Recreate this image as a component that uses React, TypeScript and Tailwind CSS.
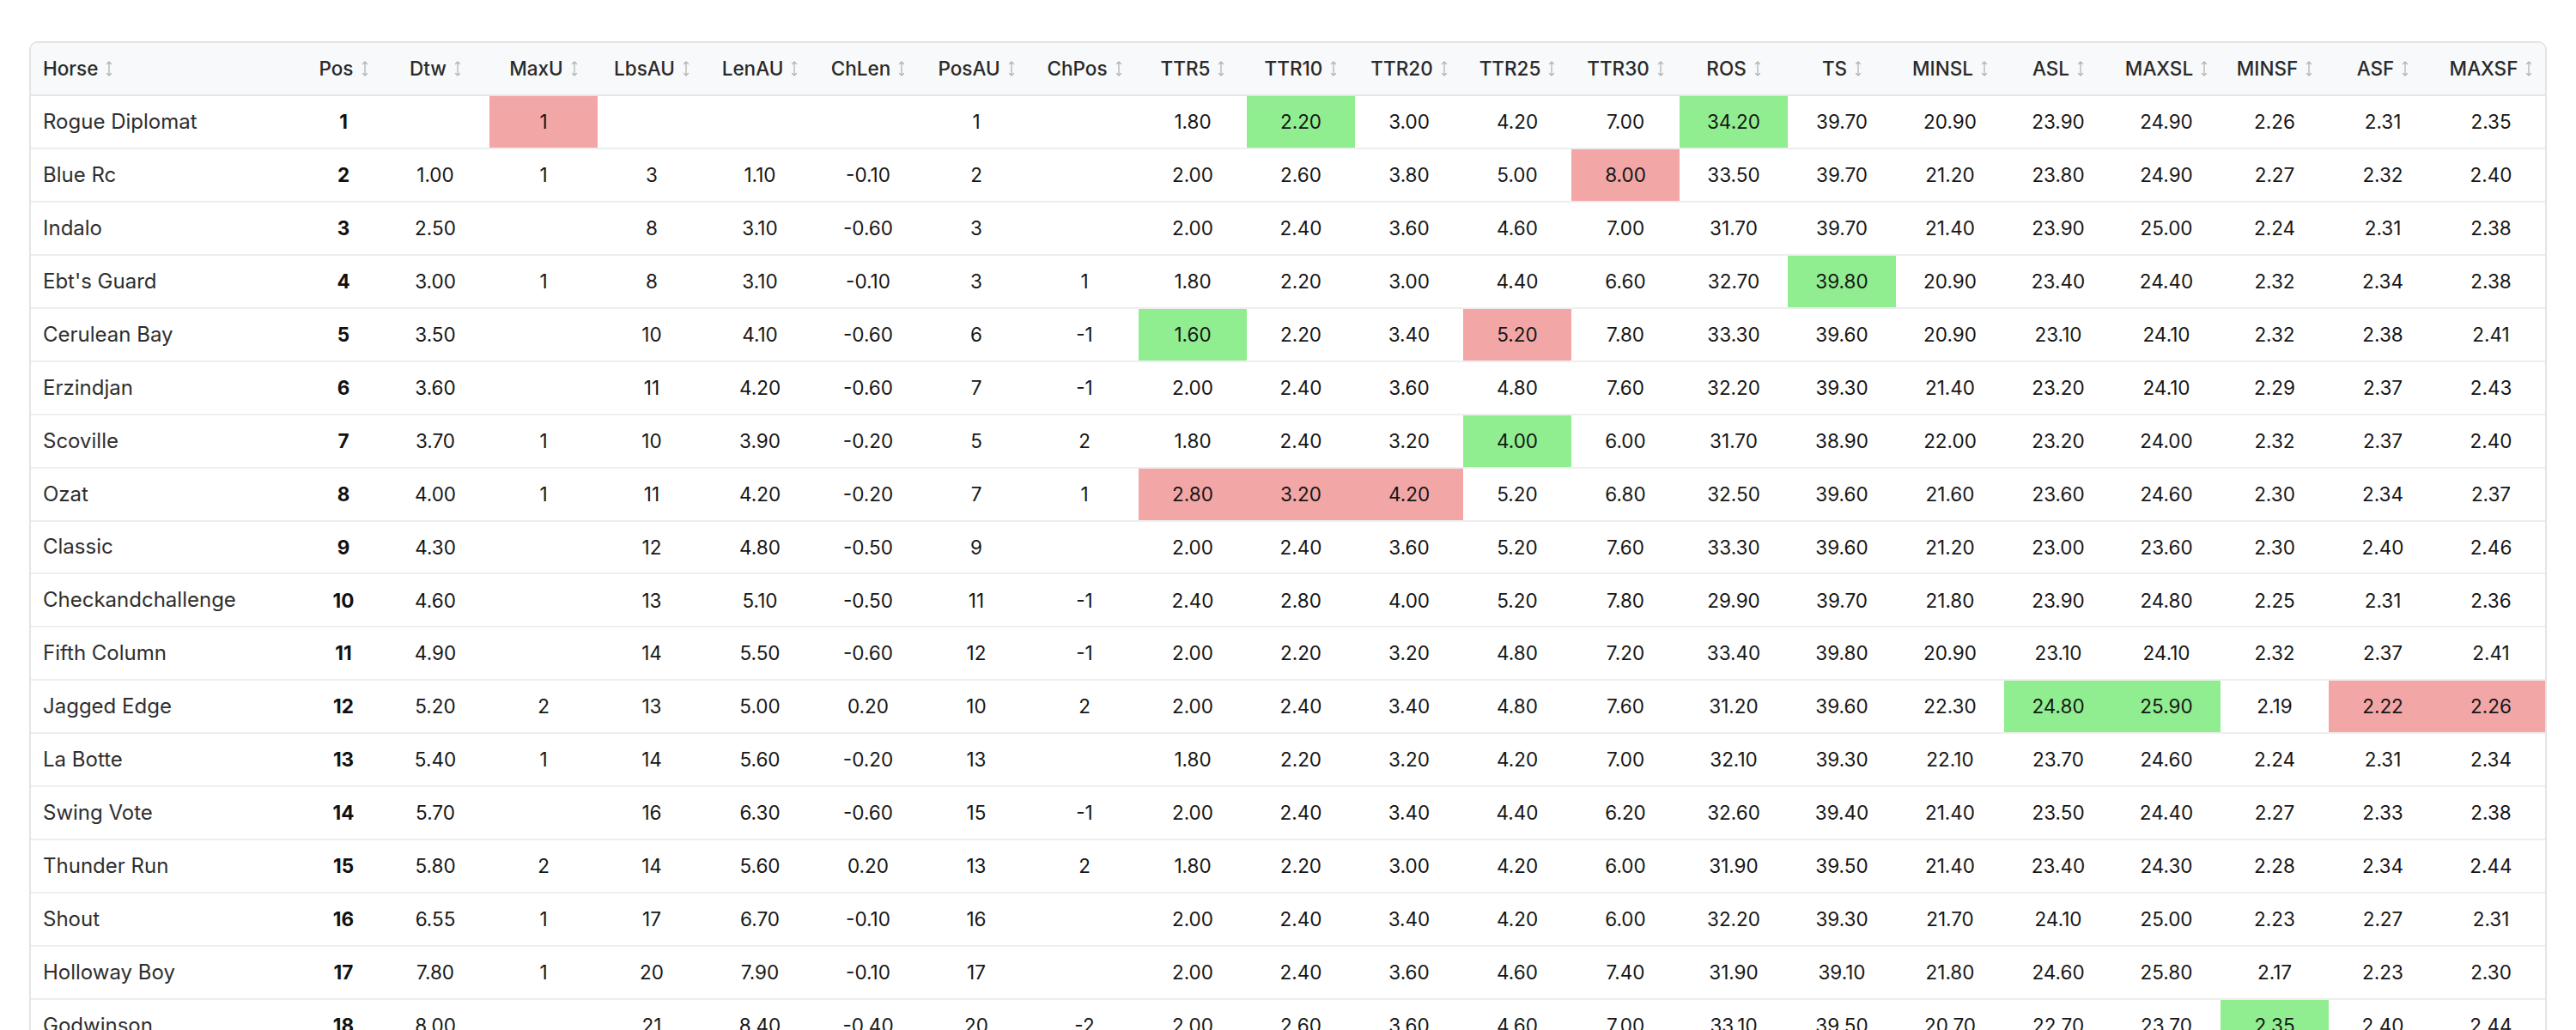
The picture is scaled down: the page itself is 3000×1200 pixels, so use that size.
import React from "react";

type Mark = "g" | "r" | undefined;

const columns = [
  "Dtw", "MaxU", "LbsAU", "LenAU", "ChLen", "PosAU", "ChPos",
  "TTR5", "TTR10", "TTR20", "TTR25", "TTR30", "ROS", "TS",
  "MINSL", "ASL", "MAXSL", "MINSF", "ASF", "MAXSF",
];

// name, pos, then the 20 stat columns in order
const rows: [string, number, string[]][] = [
  ["Rogue Diplomat", 1, ["", "1", "", "", "", "1", "", "1.80", "2.20", "3.00", "4.20", "7.00", "34.20", "39.70", "20.90", "23.90", "24.90", "2.26", "2.31", "2.35"]],
  ["Blue Rc", 2, ["1.00", "1", "3", "1.10", "-0.10", "2", "", "2.00", "2.60", "3.80", "5.00", "8.00", "33.50", "39.70", "21.20", "23.80", "24.90", "2.27", "2.32", "2.40"]],
  ["Indalo", 3, ["2.50", "", "8", "3.10", "-0.60", "3", "", "2.00", "2.40", "3.60", "4.60", "7.00", "31.70", "39.70", "21.40", "23.90", "25.00", "2.24", "2.31", "2.38"]],
  ["Ebt's Guard", 4, ["3.00", "1", "8", "3.10", "-0.10", "3", "1", "1.80", "2.20", "3.00", "4.40", "6.60", "32.70", "39.80", "20.90", "23.40", "24.40", "2.32", "2.34", "2.38"]],
  ["Cerulean Bay", 5, ["3.50", "", "10", "4.10", "-0.60", "6", "-1", "1.60", "2.20", "3.40", "5.20", "7.80", "33.30", "39.60", "20.90", "23.10", "24.10", "2.32", "2.38", "2.41"]],
  ["Erzindjan", 6, ["3.60", "", "11", "4.20", "-0.60", "7", "-1", "2.00", "2.40", "3.60", "4.80", "7.60", "32.20", "39.30", "21.40", "23.20", "24.10", "2.29", "2.37", "2.43"]],
  ["Scoville", 7, ["3.70", "1", "10", "3.90", "-0.20", "5", "2", "1.80", "2.40", "3.20", "4.00", "6.00", "31.70", "38.90", "22.00", "23.20", "24.00", "2.32", "2.37", "2.40"]],
  ["Ozat", 8, ["4.00", "1", "11", "4.20", "-0.20", "7", "1", "2.80", "3.20", "4.20", "5.20", "6.80", "32.50", "39.60", "21.60", "23.60", "24.60", "2.30", "2.34", "2.37"]],
  ["Classic", 9, ["4.30", "", "12", "4.80", "-0.50", "9", "", "2.00", "2.40", "3.60", "5.20", "7.60", "33.30", "39.60", "21.20", "23.00", "23.60", "2.30", "2.40", "2.46"]],
  ["Checkandchallenge", 10, ["4.60", "", "13", "5.10", "-0.50", "11", "-1", "2.40", "2.80", "4.00", "5.20", "7.80", "29.90", "39.70", "21.80", "23.90", "24.80", "2.25", "2.31", "2.36"]],
  ["Fifth Column", 11, ["4.90", "", "14", "5.50", "-0.60", "12", "-1", "2.00", "2.20", "3.20", "4.80", "7.20", "33.40", "39.80", "20.90", "23.10", "24.10", "2.32", "2.37", "2.41"]],
  ["Jagged Edge", 12, ["5.20", "2", "13", "5.00", "0.20", "10", "2", "2.00", "2.40", "3.40", "4.80", "7.60", "31.20", "39.60", "22.30", "24.80", "25.90", "2.19", "2.22", "2.26"]],
  ["La Botte", 13, ["5.40", "1", "14", "5.60", "-0.20", "13", "", "1.80", "2.20", "3.20", "4.20", "7.00", "32.10", "39.30", "22.10", "23.70", "24.60", "2.24", "2.31", "2.34"]],
  ["Swing Vote", 14, ["5.70", "", "16", "6.30", "-0.60", "15", "-1", "2.00", "2.40", "3.40", "4.40", "6.20", "32.60", "39.40", "21.40", "23.50", "24.40", "2.27", "2.33", "2.38"]],
  ["Thunder Run", 15, ["5.80", "2", "14", "5.60", "0.20", "13", "2", "1.80", "2.20", "3.00", "4.20", "6.00", "31.90", "39.50", "21.40", "23.40", "24.30", "2.28", "2.34", "2.44"]],
  ["Shout", 16, ["6.55", "1", "17", "6.70", "-0.10", "16", "", "2.00", "2.40", "3.40", "4.20", "6.00", "32.20", "39.30", "21.70", "24.10", "25.00", "2.23", "2.27", "2.31"]],
  ["Holloway Boy", 17, ["7.80", "1", "20", "7.90", "-0.10", "17", "", "2.00", "2.40", "3.60", "4.60", "7.40", "31.90", "39.10", "21.80", "24.60", "25.80", "2.17", "2.23", "2.30"]],
  ["Godwinson", 18, ["8.00", "", "21", "8.40", "-0.40", "20", "-2", "2.00", "2.60", "3.60", "4.60", "7.00", "33.10", "39.50", "20.70", "22.70", "23.70", "2.35", "2.40", "2.44"]],
];

// highlighted cells: "row:col" -> colour
const marks: Record<string, Mark> = {
  "0:MaxU": "r", "0:TTR10": "g", "0:ROS": "g",
  "1:TTR30": "r",
  "3:TS": "g",
  "4:TTR5": "g", "4:TTR25": "r",
  "6:TTR25": "g",
  "7:TTR5": "r", "7:TTR10": "r", "7:TTR20": "r",
  "11:ASL": "g", "11:MAXSL": "g", "11:ASF": "r", "11:MAXSF": "r",
  "17:MINSF": "g",
};

function SortIcon() {
  return (
    <svg width="8" height="20" viewBox="0 0 8 20" className="ml-[9px] shrink-0" fill="none">
      <path d="M4 2v16M1.5 4.5 4 2l2.5 2.5M1.5 15.5 4 18l2.5-2.5" stroke="#b4b4b4" strokeWidth="1.3" strokeLinecap="round" strokeLinejoin="round" />
    </svg>
  );
}

export default function App() {
  return (
    <div className="min-h-screen bg-white px-[34px] pt-[48px] font-['Inter',_'Liberation_Sans',_sans-serif] text-[22.5px]">
      <div className="overflow-hidden rounded-[10px] border-2 border-[#e4e4e6]">
        <table className="w-full table-fixed border-collapse">
          <colgroup>
            <col className="w-[320px]" />
            <col className="w-[88px]" />
            {columns.map((c) => (
              <col key={c} />
            ))}
          </colgroup>
          <thead>
            <tr className="bg-[#f8f9fa]">
              <th className="h-[61px] border-b-2 border-[#e6e6e8] pl-[14px] text-left font-medium text-[#2a2a2a]">
                <span className="inline-flex items-center">Horse<SortIcon /></span>
              </th>
              <th className="border-b-2 border-[#e6e6e8] font-medium text-[#2a2a2a]">
                <span className="inline-flex items-center">Pos<SortIcon /></span>
              </th>
              {columns.map((c) => (
                <th key={c} className="border-b-2 border-[#e6e6e8] font-medium text-[#2a2a2a]">
                  <span className="inline-flex items-center">{c}<SortIcon /></span>
                </th>
              ))}
            </tr>
          </thead>
          <tbody>
            {rows.map(([name, pos, vals], i) => (
              <tr key={name}>
                <td className="h-[61.95px] border-b-2 border-[#eeeeef] pl-[14px] text-[24px] text-[#2e2e2e]">{name}</td>
                <td className="border-b-2 border-[#eeeeef] text-center font-bold text-[#111]">{pos}</td>
                {vals.map((v, j) => {
                  const m = marks[`${i}:${columns[j]}`];
                  return (
                    <td
                      key={columns[j]}
                      className={
                        "border-b-2 border-[#eeeeef] text-center text-[#161616] " +
                        (m === "g" ? "bg-[#90ee90]" : m === "r" ? "bg-[#f2a6a6]" : "")
                      }
                    >
                      {v}
                    </td>
                  );
                })}
              </tr>
            ))}
          </tbody>
        </table>
      </div>
    </div>
  );
}
